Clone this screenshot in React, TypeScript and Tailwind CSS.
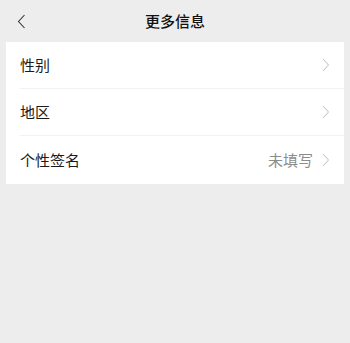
import React from "react";

const Chevron = () => (
  <svg width="8" height="14" viewBox="0 0 8 14" fill="none" className="ml-[4px]">
    <path d="M1 1L6.5 7L1 13" stroke="#bdbdbd" strokeWidth="1" />
  </svg>
);

const Row = ({ label, value, last }: { label: string; value?: string; last?: boolean }) => (
  <div className="pl-[14px]">
    <div className={`flex items-center h-[47px] pr-[14px] ${last ? "h-[48px]" : "border-b border-[#f2f2f2]"}`}>
      <span className="flex-1 text-[15px] text-[#1a1a1a]">{label}</span>
      {value && <span className="text-[15px] text-[#8c8c8c] mr-[5px]">{value}</span>}
      <Chevron />
    </div>
  </div>
);

export default function App() {
  return (
    <div
      className="w-[350px] h-[343px] bg-[#ededed] overflow-hidden"
      style={{ fontFamily: '"Noto Sans CJK SC", "Noto Sans", sans-serif' }}
    >
      <div className="relative h-[42px] flex items-center justify-center">
        <svg width="9" height="15" viewBox="0 0 9 15" fill="none" className="absolute left-[17px] top-[14px]">
          <path d="M7.5 1L1.5 7.5L7.5 14" stroke="#333" strokeWidth="1.1" />
        </svg>
        <span className="text-[15px] font-medium text-[#111]">更多信息</span>
      </div>
      <div className="mx-[6px] bg-white">
        <Row label="性别" />
        <Row label="地区" />
        <Row label="个性签名" value="未填写" last />
      </div>
    </div>
  );
}
